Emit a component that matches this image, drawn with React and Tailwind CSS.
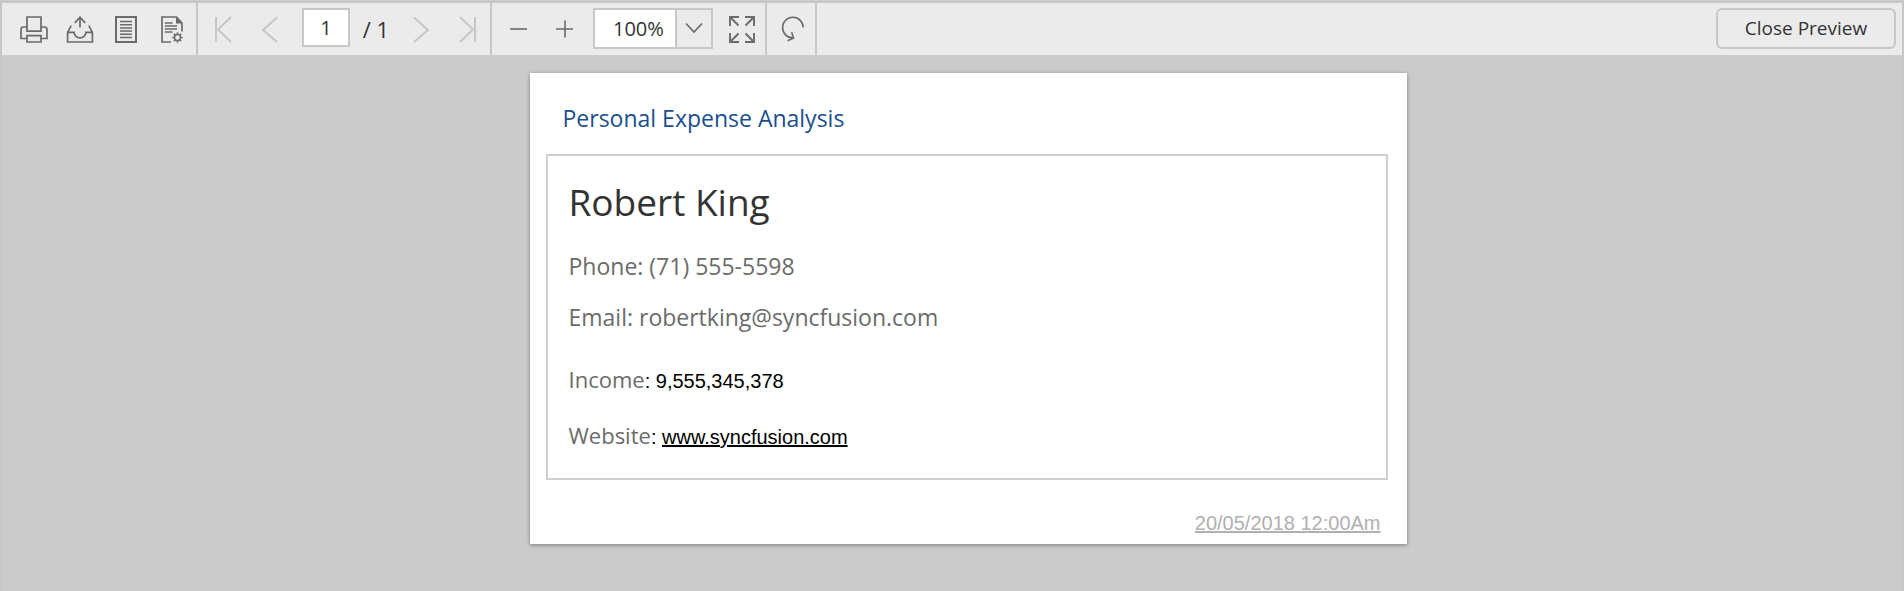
import React from "react";

const TOOL = "flex h-full w-[46px] shrink-0 items-center justify-center text-[#6a6b6c]";
const TOOL_OFF = "flex h-full w-[46px] shrink-0 items-center justify-center text-[#c4c6c7]";

function Icon({ children, stroke = 2 }) {
  return (
    <svg
      width="28"
      height="28"
      viewBox="0 0 28 28"
      fill="none"
      stroke="currentColor"
      strokeWidth={stroke}
      aria-hidden="true"
    >
      {children}
    </svg>
  );
}

function PrintIcon() {
  return (
    <Icon stroke={1.7}>
      <path d="M7 16.2V2H21V16.2Z" />
      <path d="M7 12H3.6Q1 12 1 14.6V23.5H7" />
      <path d="M21 12H24.4Q27 12 27 14.6V23.5H21" />
      <path d="M7 20.6H21V27H7Z" />
    </Icon>
  );
}

function ExportIcon() {
  return (
    <Icon stroke={1.7}>
      <path d="M14 12.5V2.5" />
      <path d="M8.8 7.8L14 2.2L19.2 7.8" />
      <path d="M5.2 10.6L1.6 17.4V27H26.4V17.4L22.8 10.6" />
      <path d="M1.6 17.4H8C8.6 21 11 22.8 14 22.8S19.4 21 20 17.4H26.4" />
    </Icon>
  );
}

function PageIcon() {
  return (
    <Icon stroke={2}>
      <path d="M4 2H24V27H4Z" />
      <path d="M8 6.5H20M8 9.7H20M8 12.9H20M8 16.1H20M8 19.3H20M8 22.5H20" strokeWidth="1.5" />
    </Icon>
  );
}

function PageSetupIcon() {
  return (
    <Icon stroke={1.7}>
      <path d="M13 27H4V2H18.5L24 8V16.5" />
      <path d="M18 2L24.6 8.6H18Z" fill="currentColor" stroke="none" />
      <path d="M6.8 8H14.5M6.8 11H19M6.8 14H19M6.8 17H14.5" strokeWidth="1.5" />
      <circle cx="19.5" cy="22.5" r="3" strokeWidth="1.5" />
      <path
        d="M19.5 19.4V17.2M19.5 25.6V27.8M16.4 22.5H14.2M22.6 22.5H24.8M17.3 20.3L15.8 18.8M21.7 24.7L23.2 26.2M17.3 24.7L15.8 26.2M21.7 20.3L23.2 18.8"
        strokeWidth="1.6"
      />
    </Icon>
  );
}

function Field({ label, children }) {
  return (
    <div className="flex items-baseline font-['Liberation_Sans',sans-serif] text-[20px] text-black">
      <dt>
        <span className="font-['Open_Sans',sans-serif] text-[22px] text-[#6b6b6b]">{label}</span>:&nbsp;
      </dt>
      <dd>{children}</dd>
    </div>
  );
}

export default function App() {
  return (
    <div className="min-h-screen bg-[#cbcbcb] pt-px font-['Open_Sans','Noto_Sans',sans-serif]">
      <div className="min-h-[590px] border-2 border-b-0 border-[#c6c8c8]">
        <header className="flex h-[52px] bg-[#ebebeb]">
          <div className="flex border-r-2 border-[#c6c8c8] pr-px pl-[9px]">
            <button type="button" aria-label="Print" className={TOOL}><PrintIcon /></button>
            <button type="button" aria-label="Export" className={TOOL}><ExportIcon /></button>
            <button type="button" aria-label="Print layout" className={TOOL}><PageIcon /></button>
            <button type="button" aria-label="Page setup" className={TOOL}><PageSetupIcon /></button>
          </div>

          <div className="flex items-center border-r-2 border-[#c6c8c8] pl-[2px]">
            <button type="button" disabled aria-label="First page" className={TOOL_OFF}>
              <Icon><path d="M7 2V27M22 2L9 14.5L22 27" /></Icon>
            </button>
            <button type="button" disabled aria-label="Previous page" className={TOOL_OFF}>
              <Icon><path d="M22 2.5L8 15L22 27" /></Icon>
            </button>
            <input
              type="text"
              aria-label="Page number"
              defaultValue="1"
              className="mb-1 ml-[10px] h-[39px] w-12 border-2 border-[#c6c8c8] bg-white text-center text-[20px] text-[#333]"
            />
            <span className="w-12 pl-1 text-center text-[22px] text-[#333]">/ 1</span>
            <button type="button" disabled aria-label="Next page" className={TOOL_OFF}>
              <Icon><path d="M7 2.5L21 15L7 27" /></Icon>
            </button>
            <button type="button" disabled aria-label="Last page" className={TOOL_OFF}>
              <Icon><path d="M7 2L20 14.5L7 27M22 2V27" /></Icon>
            </button>
          </div>

          <div className="flex items-center border-r-2 border-[#c6c8c8] pl-1">
            <button type="button" aria-label="Zoom out" className={TOOL}>
              <Icon stroke={1.6}><path d="M5 14H22" /></Icon>
            </button>
            <button type="button" aria-label="Zoom in" className={TOOL}>
              <Icon stroke={1.6}><path d="M5 14H22M14 5.5V22.5" /></Icon>
            </button>
            <div className="mr-[6px] mb-[2px] ml-[5px] flex h-[41px] w-[120px] border-2 border-[#c6c8c8]">
              <input
                type="text"
                aria-label="Zoom level"
                defaultValue="100%"
                className="h-full min-w-0 flex-1 bg-white pl-[18px] text-[20px] text-[#333]"
              />
              <button
                type="button"
                aria-label="Zoom options"
                className="flex w-9 items-center justify-center border-l-2 border-[#c6c8c8] text-[#6a6b6c]"
              >
                <svg width="18" height="12" viewBox="0 0 18 12" fill="none" stroke="currentColor" strokeWidth="1.7" aria-hidden="true">
                  <path d="M1 1.5L9 10L17 1.5" />
                </svg>
              </button>
            </div>
            <button type="button" aria-label="Fit to page" className={TOOL}>
              <Icon stroke={1.9}>
                <path d="M2 11V2H11M2 2L10.5 10.5" />
                <path d="M17 2H26V11M26 2L17.5 10.5" />
                <path d="M2 18V27H11M2 27L10.5 18.5" />
                <path d="M17 27H26V18M26 27L17.5 18.5" />
              </Icon>
            </button>
          </div>

          <div className="flex border-r-2 border-[#c6c8c8] pl-[2px]">
            <button type="button" aria-label="Refresh" className={TOOL}>
              <Icon stroke={1.6}>
                <path d="M25.2 12.6A10.3 10.3 0 1 0 14.8 22.9" />
                <path d="M13.6 17.2L15.6 23L9.6 25.8" />
              </Icon>
            </button>
          </div>

          <button
            type="button"
            className="mt-[5px] mr-[6px] ml-auto h-[41px] w-[180px] rounded-[6px] border-2 border-[#c6c8c8] text-[19px] text-[#333]"
          >
            Close Preview
          </button>
        </header>

        <main className="flex justify-center pt-[18px] pb-12 pl-8">
          <article className="w-full max-w-[877px] bg-white pt-[26px] pr-[19px] pb-[5px] pl-4 shadow-[0_1px_4px_rgba(0,0,0,0.4)]">
            <h1 className="pl-[17px] text-[23px] leading-[38px] text-[#1b4f8c]">Personal Expense Analysis</h1>
            <section className="mt-[17px] h-[326px] border-2 border-[#d0d0d0] pt-[18px] pl-[21px]">
              <h2 className="text-[37px] leading-[56px] text-[#333]">Robert King</h2>
              <p className="mt-[11px] text-[23px] leading-[51px] text-[#6b6b6b]">Phone: (71) 555-5598</p>
              <p className="text-[23px] leading-[51px] text-[#6b6b6b]">Email: robertking@syncfusion.com</p>
              <dl className="flex flex-col gap-[22px] pt-[20px] leading-8">
                <Field label="Income">9,555,345,378</Field>
                <Field label="Website">
                  <a href="#website" className="underline">www.syncfusion.com</a>
                </Field>
              </dl>
            </section>
            <p className="mt-[27px] pr-[7px] text-right font-['Liberation_Sans',sans-serif] text-[20px] leading-[32px] text-[#b0b0b0] underline">
              20/05/2018 12:00Am
            </p>
          </article>
        </main>
      </div>
    </div>
  );
}
